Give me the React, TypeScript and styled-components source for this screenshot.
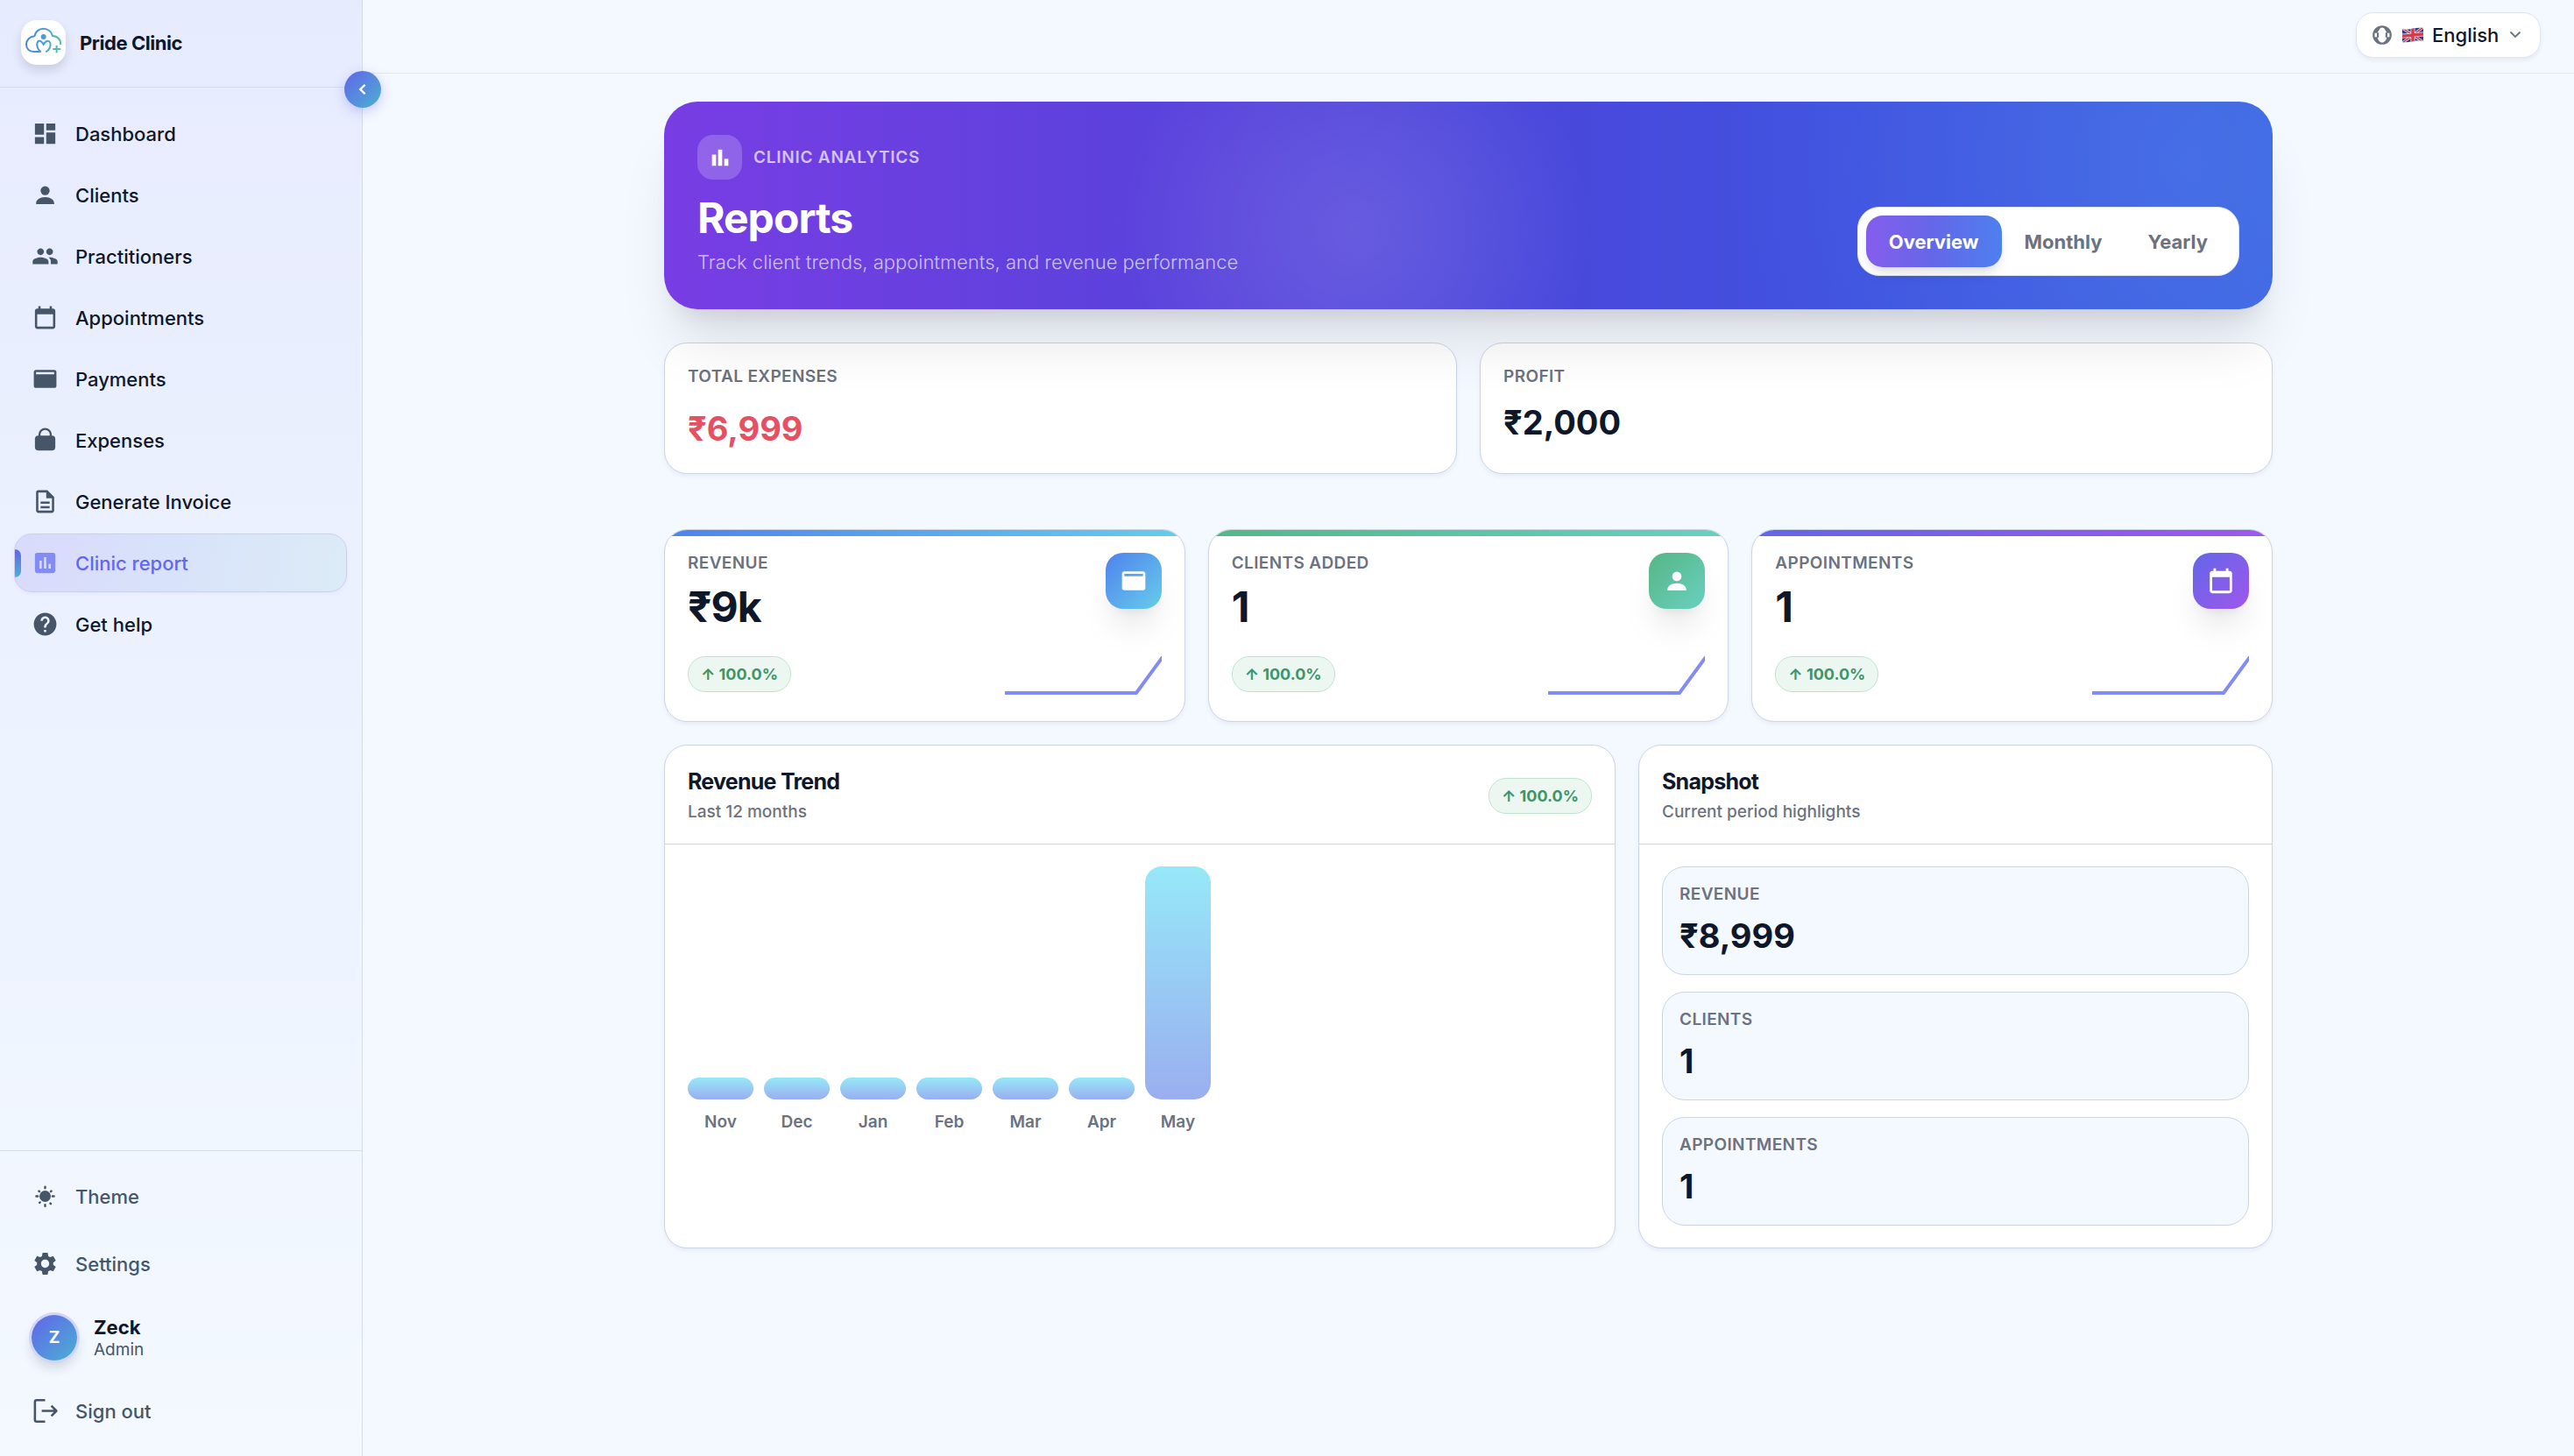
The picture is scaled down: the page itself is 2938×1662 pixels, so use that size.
import React from 'react';
import styled, { createGlobalStyle, css } from 'styled-components';
import { MdAssessment, MdBarChart, MdDashboard, MdGroup, MdHelp, MdOutlineDescription, MdSettings } from 'react-icons/md';

const color = {
  page: '#f4f8ff',
  ink: '#0f172a',
  slate: '#475569',
  muted: '#6b7280',
  line: '#ccd5e3',
  sideLine: '#d0ddf5',
  indigo: '#6366f1',
  white: '#ffffff',
};

const accent = 'linear-gradient(135deg, #6165ea, #4bb0d2)';

const GlobalStyle = createGlobalStyle`
  *, *::before, *::after { box-sizing: border-box; }
  body {
    margin: 0;
    background: ${color.page};
    color: ${color.ink};
    font-family: Inter, "Noto Sans", sans-serif;
    font-size: 22px;
    -webkit-font-smoothing: antialiased;
  }
  h1, h2, p, ul, dl, dd, dt { margin: 0; padding: 0; }
  ul { list-style: none; }
  a { color: inherit; text-decoration: none; }
  button, select { font: inherit; color: inherit; }
  svg { display: block; flex: none; }
`;

/* ---------- shell ---------- */

const Shell = styled.div`
  display: grid;
  grid-template-columns: 414px minmax(0, 1fr);
  min-height: 100vh;
`;

const Sidebar = styled.aside`
  position: relative;
  display: flex;
  flex-direction: column;
  background: linear-gradient(180deg, #e7ebfe 0%, #edf3ff 55%, #f4f9ff 100%);
  border-right: 1px solid ${color.sideLine};
`;

const Brand = styled.div`
  display: flex;
  align-items: center;
  gap: 16px;
  height: 100px;
  padding: 0 24px 2px;
  border-bottom: 1px solid ${color.sideLine};
  font-weight: 700;
  letter-spacing: -0.02em;
`;

const LogoTile = styled.span`
  display: grid;
  place-items: center;
  width: 51px;
  height: 51px;
  border-radius: 18px;
  background: ${color.white};
  box-shadow: 0 6px 12px rgba(15, 23, 42, 0.14);
`;

const CollapseButton = styled.button`
  position: absolute;
  top: 81px;
  right: -22px;
  z-index: 2;
  display: grid;
  place-items: center;
  width: 42px;
  height: 42px;
  padding: 0;
  border: 0;
  border-radius: 50%;
  background: ${accent};
  color: ${color.white};
  box-shadow: 0 4px 14px rgba(99, 102, 241, 0.32);
`;

const Nav = styled.nav`
  flex: 1;
  padding: 19px 17px 19px 16px;
`;

const NavList = styled.ul`
  display: flex;
  flex-direction: column;
  gap: 3px;
`;

const rowStyles = css`
  position: relative;
  display: flex;
  align-items: center;
  gap: 19px;
  width: 100%;
  height: 67px;
  padding: 0 19px;
  border: 1px solid transparent;
  border-radius: 20px;
  background: none;
  font-weight: 500;
  text-align: left;
`;

const NavLink = styled.a<{ $active?: boolean }>`
  ${rowStyles}
  overflow: hidden;
  color: ${(p) => (p.$active ? color.indigo : color.ink)};
  svg { color: ${(p) => (p.$active ? '#818cf8' : color.slate)}; }
  ${(p) =>
    p.$active &&
    css`
      border-color: #cccdf5;
      background: linear-gradient(100deg, #dadafa, #d8e2fa 45%, #dcebf7);
      box-shadow: 0 2px 4px rgba(99, 102, 241, 0.06);
      &::before {
        content: '';
        position: absolute;
        left: 0;
        top: 17px;
        width: 7px;
        height: 32px;
        border-radius: 0 7px 7px 0;
        background: linear-gradient(180deg, #6165ea, #4bb0d2);
      }
    `}
`;

const Footer = styled.div`
  display: flex;
  flex-direction: column;
  gap: 10px;
  padding: 18px 17px 18px 16px;
  border-top: 1px solid ${color.sideLine};
`;

const FooterButton = styled.button`
  ${rowStyles}
  color: ${color.slate};
`;

const Profile = styled.div`
  display: flex;
  align-items: center;
  gap: 19px;
  height: 81px;
  padding: 0 20px;
`;

const Avatar = styled.span`
  display: grid;
  place-items: center;
  width: 52px;
  height: 52px;
  border-radius: 50%;
  background: ${accent};
  color: ${color.white};
  font-size: 19px;
  font-weight: 700;
  box-shadow: 0 0 0 3px #d3d5f7, 0 8px 14px rgba(15, 23, 42, 0.16);
`;

const ProfileName = styled.p`
  font-weight: 700;
  line-height: 28px;
`;

const ProfileRole = styled.p`
  color: ${color.slate};
  font-size: 19px;
  line-height: 24px;
`;

const Main = styled.div`
  min-width: 0;
`;

const TopBar = styled.header`
  display: flex;
  align-items: center;
  justify-content: flex-end;
  height: 84px;
  padding: 0 38px 3px;
  border-bottom: 1px solid #e0e8f5;
`;

const Language = styled.label`
  display: flex;
  align-items: center;
  gap: 10px;
  height: 52px;
  padding: 0 20px 0 16px;
  border: 1px solid #dfe5ef;
  border-radius: 20px;
  background: ${color.white};
  box-shadow: 0 3px 5px rgba(15, 23, 42, 0.06);
  color: ${color.muted};
`;

const LanguageSelect = styled.select`
  appearance: none;
  padding: 0;
  border: 0;
  background: none;
  color: ${color.ink};
  font-weight: 500;
`;

const Content = styled.main`
  display: flex;
  flex-direction: column;
  gap: 26px;
  width: 100%;
  max-width: 1912px;
  margin: 0 auto;
  padding: 32px 38px;
`;

/* ---------- hero ---------- */

const Hero = styled.section`
  position: relative;
  display: flex;
  align-items: flex-end;
  justify-content: space-between;
  padding: 38px;
  margin-bottom: 12px;
  border-radius: 38px;
  color: ${color.white};
  background:
    radial-gradient(circle 270px at 43% 62%, rgba(255, 255, 255, 0.12), rgba(255, 255, 255, 0.08) 40%, rgba(255, 255, 255, 0)),
    radial-gradient(circle 520px at 94% 30%, rgba(120, 190, 255, 0.14), rgba(120, 190, 255, 0)),
    linear-gradient(90deg, #783de4 0%, #5b42dc 30%, #4948db 55%, #4052df 73%, #3d64e2 100%);
  box-shadow: 0 51px 64px -13px rgba(0, 0, 0, 0.1), 0 20px 26px -15px rgba(0, 0, 0, 0.1);
`;

const Eyebrow = styled.div`
  display: flex;
  align-items: center;
  gap: 13px;
  color: rgba(255, 255, 255, 0.7);
  font-size: 19px;
  font-weight: 600;
  letter-spacing: 0.04em;
  text-transform: uppercase;
`;

const EyebrowIcon = styled.span`
  display: grid;
  place-items: center;
  width: 51px;
  height: 51px;
  border-radius: 18px;
  background: rgba(255, 255, 255, 0.2);
  color: ${color.white};
`;

const HeroTitle = styled.h1`
  margin-top: 15px;
  font-size: 48px;
  font-weight: 700;
  line-height: 58px;
  letter-spacing: -0.02em;
`;

const HeroText = styled.p`
  margin-top: 5px;
  color: rgba(255, 255, 255, 0.68);
  font-weight: 300;
  line-height: 32px;
`;

const Segmented = styled.div`
  display: flex;
  padding: 9px;
  border: 1px solid #dbe2f1;
  border-radius: 25px;
  background: ${color.white};
`;

const Segment = styled.button<{ $active?: boolean }>`
  height: 59px;
  padding: 0 26px;
  border: 0;
  border-radius: 19px;
  background: ${(p) => (p.$active ? 'linear-gradient(90deg, #855dec, #6467e9 50%, #4d80ee)' : 'none')};
  color: ${(p) => (p.$active ? color.white : color.muted)};
  font-weight: 700;
  box-shadow: ${(p) => (p.$active ? '0 10px 15px -3px rgba(0, 0, 0, 0.1), 0 5px 10px -5px rgba(0, 0, 0, 0.1)' : 'none')};
`;

/* ---------- cards ---------- */

const Card = styled.section`
  border: 1px solid ${color.line};
  border-radius: 26px;
  background: ${color.white};
  box-shadow: 0 3px 5px rgba(15, 23, 42, 0.05);
`;

const Columns = styled.div<{ $template: string; $spaced?: boolean }>`
  display: grid;
  grid-template-columns: ${(p) => p.$template};
  gap: 26px;
  margin-bottom: ${(p) => (p.$spaced ? '37px' : '0')};
`;

const Label = styled.p`
  color: ${color.muted};
  font-size: 19px;
  font-weight: 600;
  line-height: 24px;
  letter-spacing: 0.02em;
  text-transform: uppercase;
`;

const Amount = styled.p<{ $gap: number; $danger?: boolean }>`
  margin-top: ${(p) => p.$gap}px;
  color: ${(p) => (p.$danger ? '#e55063' : color.ink)};
  font-size: 38px;
  font-weight: 700;
  line-height: 50px;
`;

const TotalCard = styled(Card)`
  padding: 26px;
`;

const MetricCard = styled(Card)<{ $tint: string }>`
  position: relative;
  overflow: hidden;
  padding: 26px;
  &::before {
    content: '';
    position: absolute;
    inset: 0 0 auto;
    height: 7px;
    background: linear-gradient(90deg, ${(p) => p.$tint});
  }
`;

const MetricRow = styled.div<{ $top?: number }>`
  display: flex;
  align-items: flex-start;
  justify-content: space-between;
  margin-top: ${(p) => p.$top ?? 0}px;
`;

const MetricValue = styled.p`
  margin-top: 8px;
  font-size: 48px;
  font-weight: 700;
  line-height: 60px;
  letter-spacing: -0.02em;
`;

const MetricIcon = styled.span<{ $tint: string }>`
  display: grid;
  place-items: center;
  width: 64px;
  height: 64px;
  border-radius: 20px;
  background: linear-gradient(135deg, ${(p) => p.$tint});
  color: ${color.white};
  box-shadow: 0 26px 38px -8px rgba(0, 0, 0, 0.1), 0 10px 15px -10px rgba(0, 0, 0, 0.1);
`;

const Chip = styled.span`
  height: 41px;
  padding: 0 14px;
  border: 1px solid #bfe3d0;
  border-radius: 20px;
  background: #edf7f2;
  color: #3f9568;
  font-size: 18px;
  font-weight: 700;
  line-height: 39px;
  white-space: nowrap;
`;

const SparkBox = styled.div`
  height: 48px;
`;

const Panel = styled(Card)`
  display: flex;
  flex-direction: column;
`;

const PanelHeader = styled.header`
  display: flex;
  align-items: center;
  justify-content: space-between;
  padding: 26px 26px 24px;
  border-bottom: 1px solid ${color.line};
`;

const PanelTitle = styled.h2`
  font-size: 25px;
  font-weight: 700;
  line-height: 30px;
  letter-spacing: -0.03em;
`;

const PanelText = styled.p`
  margin-top: 8px;
  color: ${color.muted};
  font-size: 19px;
  font-weight: 500;
  line-height: 24px;
`;

const PanelBody = styled.div`
  padding: 25px 26px;
`;

const Chart = styled.ul`
  display: grid;
  grid-template-columns: repeat(12, minmax(0, 1fr));
  gap: 12px;
`;

const Month = styled.li`
  display: flex;
  flex-direction: column;
  justify-content: flex-end;
  gap: 14px;
  color: ${color.muted};
  font-size: 19px;
  font-weight: 600;
  line-height: 24px;
  text-align: center;
`;

const Bar = styled.div`
  border-radius: 19px;
  background: linear-gradient(180deg, #96e8f8, #9aaef0);
`;

const Snapshot = styled.dl`
  display: grid;
  gap: 19px;
`;

const SnapshotItem = styled.div`
  padding: 19px;
  border: 1px solid ${color.line};
  border-radius: 26px;
  background: ${color.page};
`;

/* ---------- drawings ---------- */

const Icon = ({ size = 31, children }: { size?: number; children: React.ReactNode }) => (
  <svg width={size} height={size} viewBox="0 0 24 24" fill="currentColor" aria-hidden="true">
    {children}
  </svg>
);

const PersonIcon = ({ size }: { size?: number }) => (
  <Icon size={size}>
    <circle cx="12" cy="8.2" r="4" />
    <path d="M12 14c-4.6 0-8 2.4-8 5.3v.9h16v-.9c0-2.900-3.400-5.300-8-5.300z" />
  </Icon>
);

const CalendarIcon = ({ size }: { size?: number }) => (
  <Icon size={size}>
    <path d="M19 4h-1V2h-2v2H8V2H6v2H5c-1.100 0-2 .9-2 2v14c0 1.100.9 2 2 2h14c1.100 0 2-.9 2-2V6c0-1.100-.9-2-2-2zm0 16H5V9h14v11z" />
  </Icon>
);

const CardIcon = ({ size }: { size?: number }) => (
  <Icon size={size}>
    <path fillRule="evenodd" d="M4 4h16a2 2 0 0 1 2 2v12a2 2 0 0 1-2 2H4a2 2 0 0 1-2-2V6a2 2 0 0 1 2-2zm0 2v2h16V6z" />
  </Icon>
);

const BagIcon = () => (
  <Icon>
    <rect x="3" y="8" width="18" height="13" rx="3" />
    <path d="M7 9V7a5 5 0 0 1 10 0v2" fill="none" stroke="currentColor" strokeWidth="1.800" />
  </Icon>
);

const SunIcon = () => (
  <Icon>
    <circle cx="12" cy="12" r="5" />
    <path
      d="M12 3.700v1.200M12 19.500v1.200M4.200 12h1.300M18.500 12h1.300M6.500 7.400l.5.500M17 7.900l.5-.5M7.100 17.800l.4-.4M16.600 18.200l.5.500"
      fill="none"
      stroke="currentColor"
      strokeWidth="1.900"
      strokeLinecap="round"
    />
  </Icon>
);

const SignOutIcon = () => (
  <Icon>
    <path
      d="M12 2.500H4.500A1.500 1.500 0 0 0 3 4v16a1.500 1.500 0 0 0 1.500 1.500H12M9 12H22M17.500 7.500L22 12l-4.500 4.500"
      fill="none"
      stroke="currentColor"
      strokeWidth="2"
      strokeLinejoin="round"
    />
  </Icon>
);

const GlobeIcon = () => (
  <Icon size={26}>
    <path
      fillRule="evenodd"
      d="M12 2a10 10 0 1 0 0 20 10 10 0 0 0 0-20zm0 2.200c1.700 0 2.600 1 3.200 2.600.5 1.200 1.800 1.900 1.800 3.200h2.800v4H17c-.3 2.800-2.300 5.800-5 5.800S7.300 16.800 7 14H4.200v-4H7c0-1.300 1.300-2 1.800-3.200.6-1.600 1.500-2.600 3.200-2.600z"
    />
    <path d="M7.500 9.500v5M16.500 9.500v5" stroke="currentColor" strokeWidth="2" />
  </Icon>
);

const FlagIcon = () => (
  <svg width="24" height="18" viewBox="0 0 24 18" aria-hidden="true">
    <defs>
      <clipPath id="flag-wave">
        <path d="M0 2.500C7 4 15-.5 24 1v14.500c-9-1.500-17 3-24 1.500z" />
      </clipPath>
    </defs>
    <g clipPath="url(#flag-wave)">
      <rect width="24" height="18" fill="#2f3f86" />
      <path d="M0 1l24 16M24 0L0 18" stroke="#f3eef4" strokeWidth="3" />
      <path d="M0 1l24 16M24 0L0 18" stroke="#cf3a4a" strokeWidth="1.500" />
      <path d="M12 0v18M0 10c8 0 16-2 24-2" stroke="#f3eef4" strokeWidth="5" fill="none" />
      <path d="M12 0v18M0 10c8 0 16-2 24-2" stroke="#d5394b" strokeWidth="3.500" fill="none" />
    </g>
  </svg>
);

const Chevron = ({ left }: { left?: boolean }) => (
  <svg width={left ? 14 : 16} height={left ? 14 : 16} viewBox="0 0 16 16" fill="none" stroke="currentColor" strokeWidth={left ? 2.8 : 1.8} aria-hidden="true">
    <path d={left ? 'M11 2L5 8l6 6' : 'M3 5l5 5 5-5'} strokeLinecap={left ? 'butt' : 'round'} />
  </svg>
);

const Logo = () => (
  <svg width="51" height="51" viewBox="0 0 153 153" fill="none" stroke="url(#logo-ink)" strokeWidth="6" aria-hidden="true">
    <defs>
      <linearGradient id="logo-ink" gradientUnits="userSpaceOnUse" x1="17" y1="70" x2="136" y2="80">
        <stop offset="0" stopColor="#4484e6" />
        <stop offset="0.5" stopColor="#4a9cd6" />
        <stop offset="1" stopColor="#5bbfa8" />
      </linearGradient>
    </defs>
    <path d="M68 108H43C28 108 18 97 18 83c0-15 12-27 28-28 3-15 15-26 31-26 15 0 28 10 31 25 18 0 29 14 27 30" />
    <circle cx="77" cy="57" r="9" fill="url(#logo-ink)" stroke="none" />
    <path d="M67 108C56 98 53 86 56 77c3-9 13-9 21 6 9-15 20-14 23-5 3 11-3 25-15 31" />
    <path d="M122 86v26M109 99h27" />
  </svg>
);

const Sparkline = () => (
  <svg width="179" height="46" viewBox="0 0 179 46" fill="none" stroke="#828cf4" strokeWidth="4" aria-hidden="true">
    <polyline points="0,42 150,42 180,1" />
  </svg>
);

/* ---------- data ---------- */

const navItems = [
  { label: 'Dashboard', icon: <MdDashboard size={31} /> },
  { label: 'Clients', icon: <PersonIcon /> },
  { label: 'Practitioners', icon: <MdGroup size={31} /> },
  { label: 'Appointments', icon: <CalendarIcon /> },
  { label: 'Payments', icon: <CardIcon /> },
  { label: 'Expenses', icon: <BagIcon /> },
  { label: 'Generate Invoice', icon: <MdOutlineDescription size={31} /> },
  { label: 'Clinic report', icon: <MdAssessment size={31} />, active: true },
  { label: 'Get help', icon: <MdHelp size={31} /> },
];

const metrics = [
  { label: 'Revenue', value: '₹9k', tint: '#4f82ee, #66cdea', icon: <CardIcon size={32} /> },
  { label: 'Clients added', value: '1', tint: '#55b685, #69d0c0', icon: <PersonIcon size={32} /> },
  { label: 'Appointments', value: '1', tint: '#6366e8, #9f57ec', icon: <CalendarIcon size={34} /> },
];

const months = [
  { name: 'Nov', height: 25 },
  { name: 'Dec', height: 25 },
  { name: 'Jan', height: 25 },
  { name: 'Feb', height: 25 },
  { name: 'Mar', height: 25 },
  { name: 'Apr', height: 25 },
  { name: 'May', height: 266 },
];

const snapshot = [
  { label: 'Revenue', value: '₹8,999' },
  { label: 'Clients', value: '1' },
  { label: 'Appointments', value: '1' },
];

const periods = ['Overview', 'Monthly', 'Yearly'];

export default function App() {
  return (
    <>
      <GlobalStyle />
      <Shell>
        <Sidebar>
          <Brand>
            <LogoTile>
              <Logo />
            </LogoTile>
            Pride Clinic
          </Brand>
          <CollapseButton type="button" aria-label="Collapse sidebar">
            <Chevron left />
          </CollapseButton>
          <Nav>
            <NavList>
              {navItems.map((item) => (
                <li key={item.label}>
                  <NavLink href="#" $active={item.active} aria-current={item.active ? 'page' : undefined}>
                    {item.icon}
                    {item.label}
                  </NavLink>
                </li>
              ))}
            </NavList>
          </Nav>
          <Footer>
            <FooterButton type="button">
              <SunIcon />
              Theme
            </FooterButton>
            <FooterButton type="button">
              <MdSettings size={31} />
              Settings
            </FooterButton>
            <Profile>
              <Avatar>Z</Avatar>
              <div>
                <ProfileName>Zeck</ProfileName>
                <ProfileRole>Admin</ProfileRole>
              </div>
            </Profile>
            <FooterButton type="button">
              <SignOutIcon />
              Sign out
            </FooterButton>
          </Footer>
        </Sidebar>

        <Main>
          <TopBar>
            <Language>
              <GlobeIcon />
              <FlagIcon />
              <LanguageSelect aria-label="Language" defaultValue="en">
                <option value="en">English</option>
              </LanguageSelect>
              <Chevron />
            </Language>
          </TopBar>

          <Content>
            <Hero>
              <div>
                <Eyebrow>
                  <EyebrowIcon>
                    <MdBarChart size={28} />
                  </EyebrowIcon>
                  Clinic analytics
                </Eyebrow>
                <HeroTitle>Reports</HeroTitle>
                <HeroText>Track client trends, appointments, and revenue performance</HeroText>
              </div>
              <Segmented>
                {periods.map((period, index) => (
                  <Segment key={period} type="button" $active={index === 0} aria-pressed={index === 0}>
                    {period}
                  </Segment>
                ))}
              </Segmented>
            </Hero>

            <Columns $template="1fr 1fr" $spaced>
              <TotalCard>
                <Label>Total expenses</Label>
                <Amount $gap={22} $danger>
                  ₹6,999
                </Amount>
              </TotalCard>
              <TotalCard>
                <Label>Profit</Label>
                <Amount $gap={15}>₹2,000</Amount>
              </TotalCard>
            </Columns>

            <Columns $template="repeat(3, minmax(0, 1fr))">
              {metrics.map((metric) => (
                <MetricCard key={metric.label} $tint={metric.tint}>
                  <MetricRow>
                    <div>
                      <Label>{metric.label}</Label>
                      <MetricValue>{metric.value}</MetricValue>
                    </div>
                    <MetricIcon $tint={metric.tint}>{metric.icon}</MetricIcon>
                  </MetricRow>
                  <MetricRow $top={26}>
                    <Chip>↑ 100.0%</Chip>
                    <SparkBox>
                      <Sparkline />
                    </SparkBox>
                  </MetricRow>
                </MetricCard>
              ))}
            </Columns>

            <Columns $template="minmax(0, 3fr) minmax(0, 2fr)">
              <Panel>
                <PanelHeader>
                  <div>
                    <PanelTitle>Revenue Trend</PanelTitle>
                    <PanelText>Last 12 months</PanelText>
                  </div>
                  <Chip>↑ 100.0%</Chip>
                </PanelHeader>
                <PanelBody>
                  <Chart>
                    {months.map((month) => (
                      <Month key={month.name}>
                        <Bar style={{ height: month.height }} />
                        {month.name}
                      </Month>
                    ))}
                  </Chart>
                </PanelBody>
              </Panel>

              <Panel>
                <PanelHeader>
                  <div>
                    <PanelTitle>Snapshot</PanelTitle>
                    <PanelText>Current period highlights</PanelText>
                  </div>
                </PanelHeader>
                <PanelBody>
                  <Snapshot>
                    {snapshot.map((item) => (
                      <SnapshotItem key={item.label}>
                        <Label as="dt">{item.label}</Label>
                        <Amount as="dd" $gap={10}>
                          {item.value}
                        </Amount>
                      </SnapshotItem>
                    ))}
                  </Snapshot>
                </PanelBody>
              </Panel>
            </Columns>
          </Content>
        </Main>
      </Shell>
    </>
  );
}
